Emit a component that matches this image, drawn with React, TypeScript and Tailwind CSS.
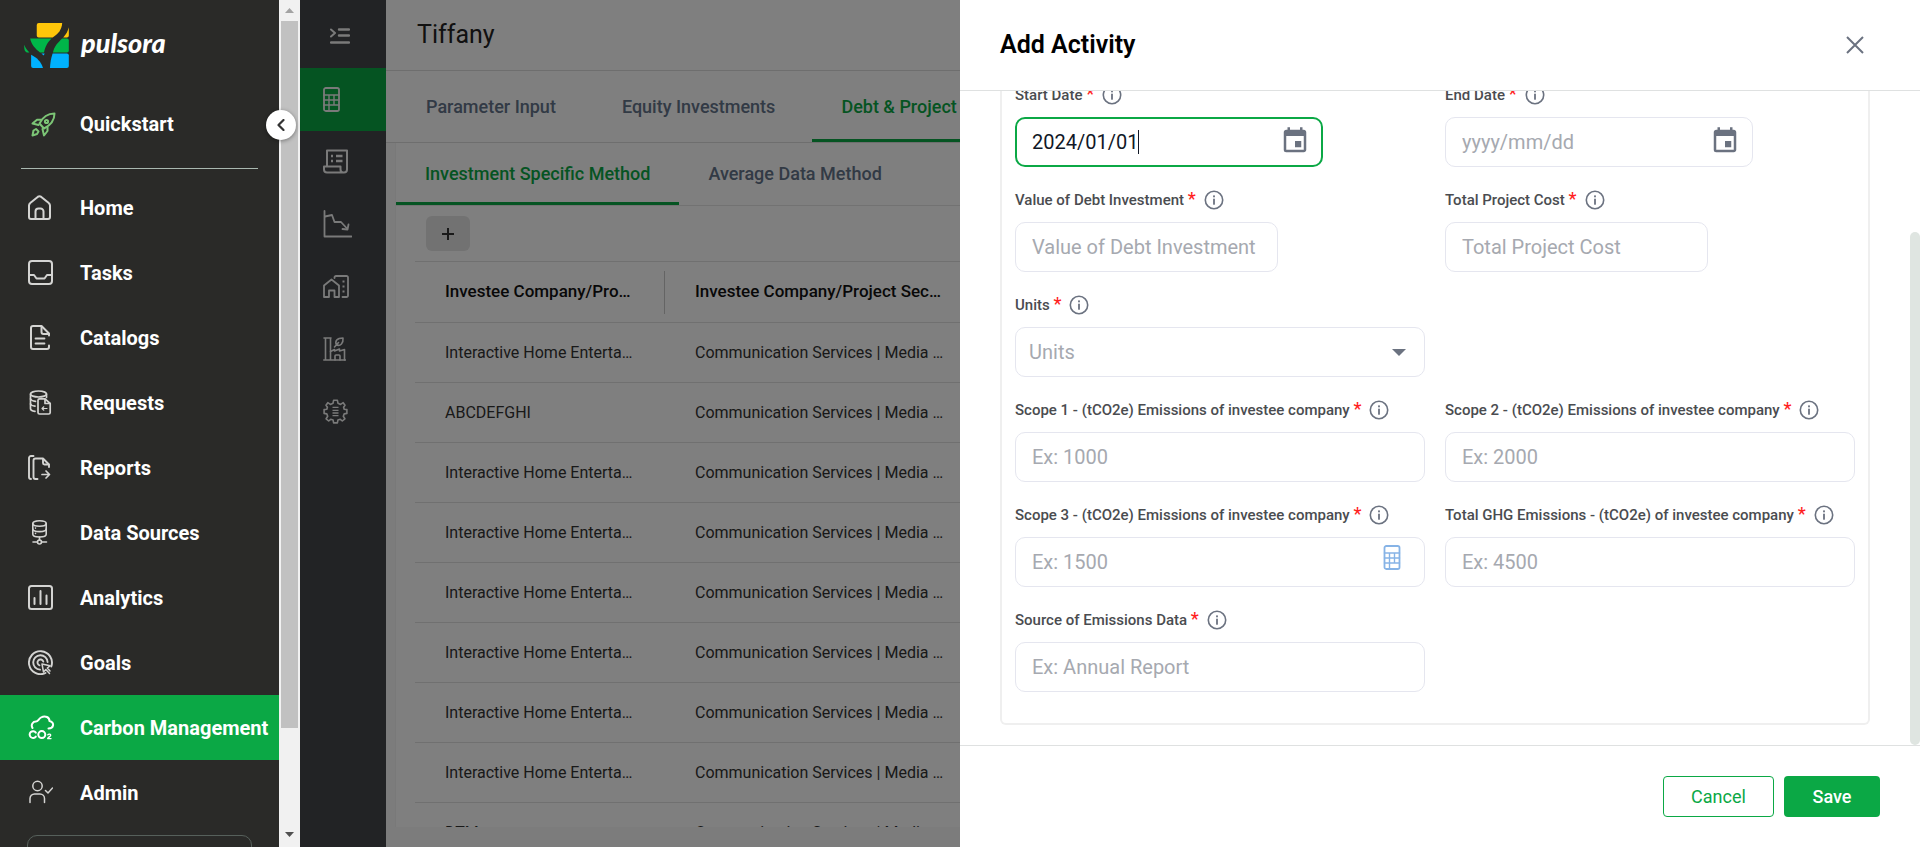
import React, { useState } from "react";
import { MdEvent } from "react-icons/md";

type IconProps = { w: number; h: number; sw?: number; box?: string; className?: string; children: React.ReactNode };

function Icon({ w, h, sw = 2, box, className, children }: IconProps) {
  return (
    <svg
      width={w}
      height={h}
      viewBox={box ?? `0 0 ${w} ${h}`}
      fill="none"
      stroke="currentColor"
      strokeWidth={sw}
      strokeLinecap="round"
      strokeLinejoin="round"
      className={className}
      aria-hidden="true"
    >
      {children}
    </svg>
  );
}

function Logo() {
  return (
    <svg width="45" height="45" viewBox="72 67 135 136" aria-hidden="true">
      <path d="M116 67H187C185 88 176 99 158 111H116a6 6 0 0 1-6-6V73a6 6 0 0 1 6-6Z" fill="#ffc60a" />
      <path d="M207 80V105a6 6 0 0 1-6 6H190C199 101 204 92 207 80Z" fill="#ffc60a" />
      <path d="M90 114H155C142 126 136 138 132 156H120C106 146 94 132 90 114Z" fill="#00b649" />
      <path d="M187 114H201a6 6 0 0 1 6 6V150a6 6 0 0 1-6 6H159C163 138 173 127 187 114Z" fill="#00b649" />
      <path d="M72 133C76 143 81 149 88 156H80C74 153 72 149 72 133Z" fill="#00b649" />
      <path d="M93 163C111 172 123 184 129 203H99a6 6 0 0 1-6-6Z" fill="#00b2ff" />
      <path d="M158 159H201a6 6 0 0 1 6 6V197a6 6 0 0 1-6 6H150C151 186 153 173 158 159Z" fill="#00b2ff" />
      <path d="M124 159H134L131 165Z" fill="#00b2ff" />
    </svg>
  );
}

const RocketIcon = (
  <Icon w={25} h={25} sw={2} className="text-[#7cc576]">
    <path d="M23.5 1.500C17 1.500 12 4.500 8.500 11.500L13 16.500C20 13 23.500 8 23.500 1.500Z" />
    <circle cx="15.500" cy="9.500" r="1.600" />
    <path d="M10.500 7.800H6L1.500 11.500L7.500 13" />
    <path d="M16.500 15V19L13 23.500L11.500 17" />
    <path d="M1.500 23.500L2.500 18.500L5 17L7.500 19.500L6 22Z" />
  </Icon>
);

const HomeIcon = (
  <Icon w={25} h={25}>
    <path d="M1 10.500a3 3 0 0 1 1.200-2.400L9.700 1.900a3 3 0 0 1 3.600 0L20.800 8.100A3 3 0 0 1 22 10.500V22a2 2 0 0 1-2 2H3a2 2 0 0 1-2-2Z" />
    <path d="M7.500 23.500V16.500a3 3 0 0 1 3-3h2a3 3 0 0 1 3 3V23.500" />
  </Icon>
);

const TasksIcon = (
  <Icon w={25} h={25}>
    <rect x="1" y="1" width="23" height="23" rx="3" />
    <path d="M1.500 15H6L8.500 18.500H16.500L19 15H23.500" />
  </Icon>
);

const CatalogsIcon = (
  <Icon w={25} h={25}>
    <path d="M21 20.500V22a2 2 0 0 1-2 2H5a2 2 0 0 1-2-2V3a2 2 0 0 1 2-2H13.500L21 8.500V10.500" />
    <path d="M13.500 1.500V7a2 2 0 0 0 2 2H20.500" />
    <path d="M7.500 13.500H16.500M7.500 18.500H16.500" strokeWidth="1.800" />
  </Icon>
);

const RequestsIcon = (
  <Icon w={25} h={25} sw={1.7}>
    <ellipse cx="10.500" cy="4" rx="8" ry="3" />
    <path d="M2.500 4V18.500C2.500 20 4 21 7 21.400M18.500 4V7.500" />
    <path d="M2.500 9C3.200 10.500 5 11 7.500 11.300M2.500 14C3.200 15.500 5 16 7 16.200" />
    <path d="M11.500 8.800H17L22.200 13.500V22.500a1.500 1.500 0 0 1-1.500 1.500H11.500A1.500 1.500 0 0 1 10 22.500V10.300A1.500 1.500 0 0 1 11.500 8.800Z" />
    <path d="M17 9V13.500H22" />
    <path d="M19 18.500H14M15.800 16.800L14 18.500L15.800 20.200" strokeWidth="1.200" />
  </Icon>
);

const ReportsIcon = (
  <Icon w={25} h={25} sw={1.9}>
    <path d="M5.500 1H3a2 2 0 0 0-2 2V22a2 2 0 0 0 2 2" />
    <path d="M9.500 24H7.500a2 2 0 0 1-2-2V5.500a2 2 0 0 1 2-2H15L21 9.500V12" />
    <path d="M15 4V8a1.500 1.500 0 0 0 1.500 1.500H20.500" />
    <path d="M14 19.500H21M18 16L21.500 19.500L18 23" strokeWidth="1.700" />
  </Icon>
);

const DataIcon = (
  <Icon w={25} h={25} sw={1.6}>
    <ellipse cx="11.500" cy="3.500" rx="6.700" ry="2.700" />
    <path d="M4.800 3.500V14.300C4.800 16 7.500 17 11.500 17S18.200 16 18.200 14.300V3.500" />
    <path d="M4.800 9C4.800 10.700 7.500 11.600 11.500 11.600S18.200 10.700 18.200 9" />
    <circle cx="11.500" cy="22" r="2" />
    <path d="M11.500 17V20M5 22H9.500M13.500 22H18.500" />
    <path d="M7.500 8V8.100M7.500 13.300V13.400" />
  </Icon>
);

const AnalyticsIcon = (
  <Icon w={25} h={25}>
    <rect x="1" y="1" width="23" height="23" rx="2.500" />
    <path d="M6.500 13V19M12.500 6V19M18.500 10.500V19" />
  </Icon>
);

const GoalsIcon = (
  <Icon w={25} h={25} sw={1.9}>
    <path d="M17.500 23A11.500 11.500 0 1 1 23.300 16.500" />
    <path d="M12 19.600A7.200 7.200 0 1 1 19.600 12" />
    <path d="M11.500 15.300A3 3 0 1 1 15.300 11.500" />
    <path d="M14 14L15.500 22L17.800 19.500L21.500 23.500M14 14L22 15.800L19.300 18L22 21" strokeWidth="1.500" />
  </Icon>
);

const CarbonIcon = (
  <Icon w={27} h={25} sw={2} className="text-white">
    <path d="M4.500 13C2.500 9.500 5 6.500 8 6.500C10 6.500 10.500 4 13 2.500C17.500 0 21.500 2.500 21.500 6C24 6.500 25.500 8.500 25 10.500C24.500 13 22.500 13.500 20.500 13.500" />
    <path d="M7.800 17.600A3.400 3.400 0 1 0 7.800 21.600" />
    <circle cx="13.800" cy="19.600" r="3.500" />
    <path d="M19.800 19.800C20.500 18.700 22.800 18.900 22.700 20.200C22.600 21.400 20.300 22.200 19.700 23.600H23" strokeWidth="1.400" />
  </Icon>
);

const AdminIcon = (
  <Icon w={25} h={25} sw={1.5}>
    <circle cx="9.500" cy="6" r="4.700" />
    <path d="M2 22.500V18.500a4.500 4.500 0 0 1 4.500-4.500h5.500a4.500 4.500 0 0 1 4.500 4.500V22.500" />
    <path d="M17.500 10.500L20 13L24.500 8" />
  </Icon>
);

const NAV = [
  { label: "Home", icon: HomeIcon },
  { label: "Tasks", icon: TasksIcon },
  { label: "Catalogs", icon: CatalogsIcon },
  { label: "Requests", icon: RequestsIcon },
  { label: "Reports", icon: ReportsIcon },
  { label: "Data Sources", icon: DataIcon },
  { label: "Analytics", icon: AnalyticsIcon },
  { label: "Goals", icon: GoalsIcon },
  { label: "Carbon Management", icon: CarbonIcon, active: true },
  { label: "Admin", icon: AdminIcon },
];

function Sidebar() {
  return (
    <aside className="flex w-[279px] shrink-0 flex-col overflow-hidden bg-[#2a2a28] text-white">
      <div className="flex h-[90px] shrink-0 items-center gap-3 pl-6">
        <Logo />
        <span className="pb-1 font-['Lato'] text-[27px] leading-8 font-black italic">pulsora</span>
      </div>
      <a href="#quickstart" className="flex h-[68px] shrink-0 items-center pl-[31px] text-xl font-bold">
        <span className="w-[49px]">{RocketIcon}</span>
        Quickstart
      </a>
      <div className="mx-[21px] mt-[10px] mb-[6px] h-px shrink-0 bg-[#a9b8b0]" />
      <nav className="flex flex-col">
        {NAV.map((n) => (
          <a
            key={n.label}
            href={`#${n.label.toLowerCase().replace(" ", "-")}`}
            className={
              n.active
                ? "flex h-[65px] shrink-0 items-center bg-[#0ba845] pl-7 text-xl font-bold whitespace-nowrap"
                : "flex h-[65px] shrink-0 items-center pl-7 text-xl font-bold whitespace-nowrap"
            }
          >
            <span className="w-[52px] shrink-0 text-[#d4d4d2]">{n.icon}</span>
            {n.label}
          </a>
        ))}
      </nav>
      <div className="mx-[27px] mt-[10px] h-16 shrink-0 rounded-[10px] border border-[#56605b]" />
    </aside>
  );
}

function SideScrollbar() {
  return (
    <div className="relative flex w-[21px] shrink-0 flex-col items-center bg-[#f1f1f1]">
      <div className="flex h-[21px] shrink-0 items-center">
        <svg width="9" height="5" viewBox="0 0 9 5" aria-hidden="true">
          <path d="M0 5L4.500 0L9 5Z" fill="#a3a3a3" />
        </svg>
      </div>
      <div className="w-[17px] grow bg-[#c1c1c1]" />
      <div className="flex h-[119px] shrink-0 items-end pb-[10px]">
        <svg width="9" height="5" viewBox="0 0 9 5" aria-hidden="true">
          <path d="M0 0L4.500 5L9 0Z" fill="#505050" />
        </svg>
      </div>
      <button
        type="button"
        aria-label="Collapse sidebar"
        className="absolute top-[110px] -left-[13px] z-30 flex size-[30px] items-center justify-center rounded-full bg-white text-[#333] shadow-[0_1px_4px_rgba(0,0,0,0.4)]"
      >
        <Icon w={8} h={12} sw={2.2}>
          <path d="M6.500 1L1.500 6L6.500 11" />
        </Icon>
      </button>
    </div>
  );
}

const CalculatorShape = (
  <>
    <rect x="1" y="1" width="15" height="23" rx="1.800" />
    <path d="M1 8H16M1 13H16M1 18H16M6 8V24M11 8V18" strokeWidth="1.400" />
  </>
);

const MODULES = [
  {
    name: "Calculator",
    active: true,
    icon: (
      <Icon w={17} h={25} sw={1.8}>
        {CalculatorShape}
      </Icon>
    ),
  },
  {
    name: "Invoices",
    icon: (
      <Icon w={25} h={25} sw={2}>
        <path d="M4 17V1.500H24V20.500a3 3 0 0 1-3 3H4a3 3 0 0 1-3-3V17.500H17.500V20.500a3 3 0 0 0 3 3" />
        <path d="M8 7H10M13 7H19.500M8 12H10M13 12H19.500" strokeWidth="2.400" strokeLinecap="butt" />
      </Icon>
    ),
  },
  {
    name: "Trends",
    icon: (
      <Icon w={29} h={28} sw={1.8}>
        <path d="M1.500 1V26.500H28.500" />
        <path d="M2 6.500L9 5L11.500 12H18L24 18.500" />
        <path d="M25.500 14.500L24.500 19.500L19.500 19" />
      </Icon>
    ),
  },
  {
    name: "Facilities",
    icon: (
      <Icon w={26} h={23} sw={1.8}>
        <path d="M1 10.500L8.500 4.500L16 10.500V22H11.500V15.500H6V22H1Z" />
        <path d="M11.500 3V2.500A1.500 1.500 0 0 1 13 1H23.500A1.500 1.500 0 0 1 25 2.500V20.500A1.500 1.500 0 0 1 23.500 22H19.500" />
        <path d="M19.500 6.500H21.500M19.500 11.500H21.500M19.500 16.500H21.500" strokeWidth="2.200" strokeLinecap="butt" />
      </Icon>
    ),
  },
  {
    name: "Plants",
    icon: (
      <Icon w={23} h={24} sw={1.6}>
        <path d="M1 1H8M2.500 1V23M7.500 1V23M0.800 23H22.500" />
        <path d="M7.500 14.500L11.500 12.500V14L16.500 12V14L21.500 12.500V23M12 23V19a1 1 0 0 1 1-1h3a1 1 0 0 1 1 1V23" />
        <path d="M11.500 10L15.500 5.500M13.500 8C11.500 4 14 1 20 1C20.500 6 17.500 9.500 13.500 8Z" />
      </Icon>
    ),
  },
  {
    name: "Settings",
    icon: (
      <Icon w={25} h={25} sw={1.6}>
        <path d="M10.600 1.300H14.400L15 4.300L17.600 5.400L20.200 3.700L22 6.300L20.600 8.300L21.200 10.200L23.900 10.600V14.400L21.200 14.900L20.300 17.300L21.900 19.800L19.300 22L17.300 20.300L14.900 21.100L14.400 23.900H10.600L10.100 21.100L7.700 20.300L5.700 22L3.100 19.800L4.700 17.300L3.800 14.900L1.100 14.400V10.600L3.800 10.200L4.400 8.300L3 6.300L4.800 3.700L7.400 5.400L10 4.300Z" />
        <path d="M9.500 8.300H15.500M9.500 11.300H15.500M9.500 14H15.500M9.500 16.700H15.500" strokeWidth="1.300" strokeLinecap="butt" />
      </Icon>
    ),
  },
];

function ModuleRail() {
  return (
    <nav className="flex w-[86px] shrink-0 flex-col bg-[#44464a] text-[#f4f4f4]">
      <button type="button" aria-label="Expand menu" className="flex h-[68px] items-center pt-1 pl-[30px]">
        <Icon w={20} h={16} sw={2}>
          <path d="M1 1.500L5 5L1 8.500" />
          <path d="M9 1.500H19M9 7.500H19M1 14.500H19" strokeWidth="2.400" />
        </Icon>
      </button>
      <div className="flex h-[375px] flex-col">
        {MODULES.map((m) => (
          <a
            key={m.name}
            href={`#${m.name.toLowerCase()}`}
            aria-label={m.name}
            className={m.active ? "flex flex-1 items-center bg-[#0ba845] pl-[23px]" : "flex flex-1 items-center pl-[23px]"}
          >
            {m.icon}
          </a>
        ))}
      </div>
    </nav>
  );
}

const COMPANIES = [
  "Interactive Home Enterta…",
  "ABCDEFGHI",
  "Interactive Home Enterta…",
  "Interactive Home Enterta…",
  "Interactive Home Enterta…",
  "Interactive Home Enterta…",
  "Interactive Home Enterta…",
  "Interactive Home Enterta…",
  "DTM",
];

function Tab({ children, active }: { children: React.ReactNode; active?: boolean }) {
  return (
    <button
      type="button"
      role="tab"
      aria-selected={!!active}
      className={
        active
          ? "border-b-3 border-[#0ba845] px-[29px] pt-[3px] font-medium whitespace-nowrap text-[#0ba845]"
          : "px-[29px] font-medium whitespace-nowrap text-[#64748b]"
      }
    >
      {children}
    </button>
  );
}

function Main() {
  return (
    <main className="flex min-w-0 flex-1 flex-col bg-[#f9f9f9]">
      <header className="flex h-[71px] shrink-0 items-center border-b border-[#dcdcdc] bg-white pl-[31px]">
        <h1 className="text-[25px] text-[#222]">Tiffany</h1>
      </header>
      <div role="tablist" className="flex h-[72px] shrink-0 gap-2 border-b border-[#dcdcdc] bg-white pl-[11px] text-lg">
        <Tab>Parameter Input</Tab>
        <Tab>Equity Investments</Tab>
        <Tab active>Debt &amp; Project</Tab>
      </div>
      <div className="mb-5 ml-[9px] flex min-h-0 flex-1 flex-col overflow-hidden border-l border-[#f3f3f3] bg-white">
        <div role="tablist" className="flex h-[63px] shrink-0 border-b border-[#e4e4e4] text-lg">
          <Tab active>Investment Specific Method</Tab>
          <Tab>Average Data Method</Tab>
        </div>
        <div className="flex h-[55px] shrink-0 items-center pl-[30px]">
          <button
            type="button"
            aria-label="Add row"
            className="flex h-[35px] w-11 items-center justify-center rounded-md bg-[#e4e4e4] text-[#333]"
          >
            <Icon w={14} h={14} sw={2}>
              <path d="M7 1V13M1 7H13" strokeLinecap="butt" />
            </Icon>
          </button>
        </div>
        <table className="ml-[19px] w-full table-fixed border-collapse text-left text-base">
          <colgroup>
            <col className="w-[250px]" />
            <col />
          </colgroup>
          <thead>
            <tr className="h-[61px] border-y border-[#e0e0e0] text-[17px]">
              <th className="p-0 font-medium text-[#111]">
                <div className="flex h-[43px] items-center border-r border-[#c8c8c8] pl-[30px]">Investee Company/Pro…</div>
              </th>
              <th className="p-0 pl-[30px] font-medium text-[#111]">Investee Company/Project Sec…</th>
            </tr>
          </thead>
          <tbody className="font-normal text-[#333]">
            {COMPANIES.map((c, i) => (
              <tr key={i} className="h-[60px] border-b border-[#e0e0e0]">
                <td className="p-0 pl-[30px] whitespace-nowrap">{c}</td>
                <td className="p-0 pl-[30px] whitespace-nowrap">Communication Services | Media …</td>
              </tr>
            ))}
          </tbody>
        </table>
      </div>
    </main>
  );
}

function InfoIcon() {
  return (
    <svg width="20" height="20" viewBox="0 0 20 20" fill="none" className="text-[#6b7280]" aria-hidden="true">
      <circle cx="10" cy="10" r="8.700" stroke="currentColor" strokeWidth="1.600" />
      <rect x="9.100" y="8.700" width="1.800" height="6" fill="currentColor" />
      <rect x="9.100" y="5.400" width="1.800" height="1.900" fill="currentColor" />
    </svg>
  );
}

const INPUT =
  "h-[50px] w-full rounded-[10px] border border-[#e5e6ef] bg-white px-4 text-xl font-normal text-[#111827] outline-none placeholder:text-[#a6a9b0]";

function Field({ id, label, className, children }: { id: string; label: string; className?: string; children: React.ReactNode }) {
  return (
    <div className={className}>
      <div className="mb-[6px] flex h-8 items-center gap-2">
        <label htmlFor={id} className="text-[15px] font-medium whitespace-nowrap text-[#4a4c50]">
          {label} <span className="text-lg leading-4 text-[#ff1f1f]">*</span>
        </label>
        <InfoIcon />
      </div>
      {children}
    </div>
  );
}

function Drawer() {
  const [start, setStart] = useState("2024/01/01");
  return (
    <section role="dialog" aria-label="Add Activity" className="absolute inset-y-0 right-0 z-20 flex w-1/2 flex-col bg-white">
      <header className="flex h-[91px] shrink-0 items-center justify-between border-b border-[#dfe1e1] pr-14 pl-10">
        <h2 className="text-[25px] font-semibold text-black">Add Activity</h2>
        <button type="button" aria-label="Close" className="text-[#6b7280]">
          <Icon w={18} h={18} sw={2}>
            <path d="M1 1L17 17M17 1L1 17" strokeLinecap="butt" />
          </Icon>
        </button>
      </header>
      <div className="flex min-h-0 flex-1">
        <form className="flex min-w-0 flex-1 flex-col justify-end overflow-hidden px-10 pb-5">
          <div className="grid shrink-0 grid-cols-2 gap-x-5 gap-y-[17px] rounded-b-md border-2 border-t-0 border-[#efefef] px-[13px] pb-[31px]">
            <Field id="start" label="Start Date">
              <div className="relative w-[308px]">
                <input
                  id="start"
                  value={start}
                  onChange={(e) => setStart(e.target.value)}
                  className="h-[50px] w-full rounded-[10px] border-2 border-[#0ba845] bg-white px-[15px] text-xl font-normal text-[#111827] outline-none"
                />
                <span className="absolute top-[13px] left-[123px] h-6 w-px bg-[#111827]" />
                <MdEvent size={30} className="absolute top-[9px] right-[13px] text-[#6b7280]" />
              </div>
            </Field>
            <Field id="end" label="End Date">
              <div className="relative w-[308px]">
                <input id="end" placeholder="yyyy/mm/dd" className={INPUT} />
                <MdEvent size={30} className="absolute top-[9px] right-[13px] text-[#6b7280]" />
              </div>
            </Field>
            <Field id="debt" label="Value of Debt Investment">
              <div className="w-[263px]">
                <input id="debt" placeholder="Value of Debt Investment" className={INPUT} />
              </div>
            </Field>
            <Field id="cost" label="Total Project Cost">
              <div className="w-[263px]">
                <input id="cost" placeholder="Total Project Cost" className={INPUT} />
              </div>
            </Field>
            <Field id="units" label="Units" className="col-span-2">
              <div className="relative w-[calc(50%-10px)]">
                <select
                  id="units"
                  className="h-[50px] w-full appearance-none rounded-[10px] border border-[#e5e6ef] bg-white pl-[13px] text-xl font-normal text-[#a6a9b0] outline-none"
                >
                  <option>Units</option>
                </select>
                <svg width="14" height="7" viewBox="0 0 14 7" className="pointer-events-none absolute top-[22px] right-[19px]" aria-hidden="true">
                  <path d="M0 0H14L7 7Z" fill="#6b7280" />
                </svg>
              </div>
            </Field>
            <Field id="scope1" label="Scope 1 - (tCO2e) Emissions of investee company">
              <input id="scope1" placeholder="Ex: 1000" className={INPUT} />
            </Field>
            <Field id="scope2" label="Scope 2 - (tCO2e) Emissions of investee company">
              <input id="scope2" placeholder="Ex: 2000" className={INPUT} />
            </Field>
            <Field id="scope3" label="Scope 3 - (tCO2e) Emissions of investee company">
              <div className="relative">
                <input id="scope3" placeholder="Ex: 1500" className={INPUT} />
                <button type="button" aria-label="Open calculator" className="absolute top-2 right-6 text-[#86b3e6]">
                  <Icon w={18} h={25} sw={1.8} box="0 0 17 25">
                    {CalculatorShape}
                  </Icon>
                </button>
              </div>
            </Field>
            <Field id="ghg" label="Total GHG Emissions - (tCO2e) of investee company">
              <input id="ghg" placeholder="Ex: 4500" className={INPUT} />
            </Field>
            <Field id="source" label="Source of Emissions Data">
              <input id="source" placeholder="Ex: Annual Report" className={INPUT} />
            </Field>
          </div>
        </form>
        <div className="w-[10px] shrink-0 pt-[141px]">
          <div className="h-full rounded-full bg-[#dfe5e1]" />
        </div>
      </div>
      <footer className="flex h-[102px] shrink-0 items-center justify-end gap-[10px] border-t border-[#dfe1e1] pr-10">
        <button type="button" className="h-[41px] w-[111px] rounded border border-[#0ba845] text-lg text-[#0ba845]">
          Cancel
        </button>
        <button type="button" className="h-[41px] w-24 rounded bg-[#0ba845] text-lg font-medium text-white">
          Save
        </button>
      </footer>
    </section>
  );
}

export default function App() {
  return (
    <div className="flex h-screen overflow-hidden bg-white font-['Roboto',sans-serif]">
      <Sidebar />
      <SideScrollbar />
      <div className="relative flex min-w-0 flex-1 overflow-hidden">
        <ModuleRail />
        <Main />
        <div className="absolute inset-0 z-10 bg-black/50" />
      </div>
      <Drawer />
    </div>
  );
}
